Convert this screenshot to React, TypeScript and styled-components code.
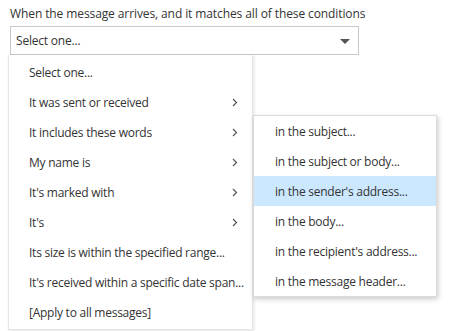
import React from "react";
import styled, { createGlobalStyle } from "styled-components";

const Global = createGlobalStyle`
  html, body { margin: 0; padding: 0; background: #ffffff; }
  body { font-family: "Segoe UI", "Open Sans", "Noto Sans", sans-serif; color: #333333; }
`;

const Page = styled.div`
  width: 457px;
  height: 331px;
  padding: 6px 0 0 10px;
  box-sizing: border-box;
  overflow: hidden;
`;

const Label = styled.div`
  font-size: 12px;
  line-height: 16px;
  color: #333333;
  letter-spacing: -0.1px;
`;

const Field = styled.div`
  position: relative;
  width: 349px;
  margin-top: 4px;
`;

const SelectBox = styled.div`
  height: 29px;
  box-sizing: border-box;
  border: 1px solid #c8c8c8;
  display: flex;
  align-items: center;
  justify-content: space-between;
  padding: 0 8px 0 5px;
  font-size: 12px;
  color: #333333;
  letter-spacing: -0.2px;
`;

const Caret = styled.span`
  width: 0;
  height: 0;
  border-left: 5px solid transparent;
  border-right: 5px solid transparent;
  border-top: 5px solid #555555;
  margin-top: 1px;
`;

const Menu = styled.div<{ $left: number; $top: number; $width: number; $strong?: boolean }>`
  position: absolute;
  left: ${(p) => p.$left}px;
  top: ${(p) => p.$top}px;
  width: ${(p) => p.$width}px;
  box-sizing: border-box;
  background: #ffffff;
  border: 1px solid ${(p) => (p.$strong ? "#dcdcdc" : "#e6e6e6")};
  border-top-color: ${(p) => (p.$strong ? "#dcdcdc" : "transparent")};
  box-shadow: ${(p) =>
    p.$strong ? "1px 2px 5px rgba(0,0,0,0.22)" : "1px 1px 3px rgba(0,0,0,0.12)"};
  padding: ${(p) => (p.$strong ? "0" : "1px 0 2px")};
  z-index: ${(p) => (p.$strong ? 3 : 2)};
`;

const Item = styled.div<{ $pad: number; $active?: boolean }>`
  height: 30px;
  display: flex;
  align-items: center;
  justify-content: space-between;
  padding: 0 14px 0 ${(p) => p.$pad}px;
  font-size: 12px;
  color: #333333;
  letter-spacing: -0.25px;
  white-space: nowrap;
  background: ${(p) => (p.$active ? "#cce8ff" : "transparent")};
`;

const Chevron = () => (
  <svg width="6" height="9" viewBox="0 0 6 9" fill="none">
    <path d="M1 1l3.5 3.5L1 8" stroke="#555" strokeWidth="1.2" />
  </svg>
);

const mainItems: { label: string; sub?: boolean }[] = [
  { label: "Select one..." },
  { label: "It was sent or received", sub: true },
  { label: "It includes these words", sub: true },
  { label: "My name is", sub: true },
  { label: "It's marked with", sub: true },
  { label: "It's", sub: true },
  { label: "Its size is within the specified range..." },
  { label: "It's received within a specific date span..." },
  { label: "[Apply to all messages]" },
];

const subItems = [
  "in the subject...",
  "in the subject or body...",
  "in the sender's address...",
  "in the body...",
  "in the recipient's address...",
  "in the message header...",
];

export default function App() {
  return (
    <>
      <Global />
      <Page>
        <Label>When the message arrives, and it matches all of these conditions</Label>
        <Field>
          <SelectBox>
            <span>Select one...</span>
            <Caret />
          </SelectBox>
          <Menu $left={-2} $top={29} $width={245}>
            {mainItems.map((it) => (
              <Item key={it.label} $pad={20}>
                <span>{it.label}</span>
                {it.sub && <Chevron />}
              </Item>
            ))}
          </Menu>
          <Menu $left={243} $top={89} $width={184} $strong>
            {subItems.map((s, i) => (
              <Item key={s} $pad={21} $active={i === 2}>
                <span>{s}</span>
              </Item>
            ))}
          </Menu>
        </Field>
      </Page>
    </>
  );
}
